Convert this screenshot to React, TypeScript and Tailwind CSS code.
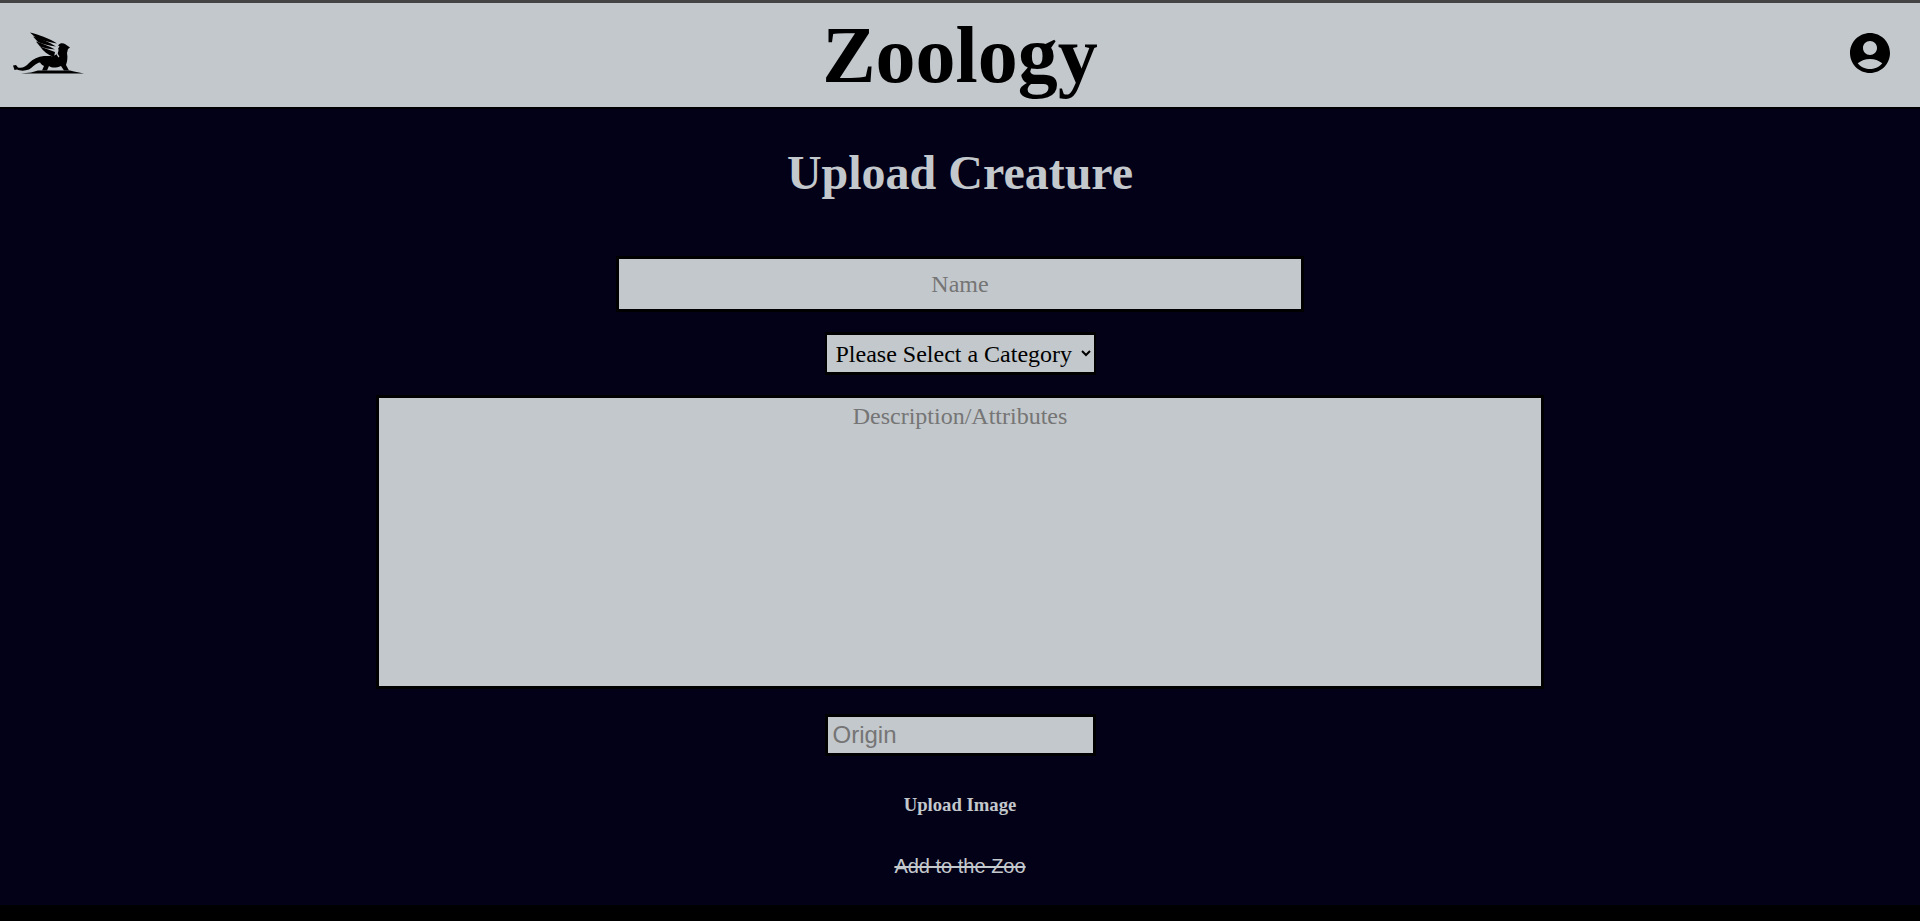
import { MdAccountCircle } from 'react-icons/md';

function Griffin() {
  return (
    <svg viewBox="12 30 74 46" className="w-[74px] h-[46px] -ml-[14px]" fill="#000">
      {/* wing feathers */}
      <path d="M30 32.5 C38 34.5 49 38 57 43.5 C50 42.5 42 40.5 36 38 Z" />
      <path d="M33 36.5 C40 38.5 49 42 56 46.5 C49 45.5 43 44 38 42 Z" />
      <path d="M36 41.5 C42 43.5 49 46 55 49.5 C49 49 44 48 40 46.5 Z" />
      <path d="M40 46.5 C45 48.5 50 50 55 52 L54 57 C48 55 43 51 40 46.5 Z" />
      {/* body, head and tail */}
      <path d="M50 56 C56 57 60 52 58 48 C57 44 62 42 65 44 L70 47.5 L68 49 L67 53 C68 58 67 62 66 65 L69 70.5 L64 70.5 L61 66 C56 68 52 68 49 66 L47 70.5 L42 70.5 L44 66 C42 65 41 64 40 62.5 C36 63 33 67 29 69.5 C25 71 20 71 17 69.5 L14.5 70 L13 65.5 L16 65 L18 67.5 C22 68.5 26 66.5 29 63 C33 59 38 56.5 44 56 Z" />
      {/* neck highlight */}
      <path d="M59 46 C56 49 56 54 59 57" fill="none" stroke="#c3c8cc" strokeWidth="1.2" />
      {/* ground */}
      <path d="M21 73.5 L31 72.5 L38 70.5 L70 70.5 L74 71.5 L84 73.5 Z" />
    </svg>
  );
}

export default function App() {
  return (
    <div className="min-h-[921px] bg-black font-['Liberation_Serif',serif]">
      <div className="bg-[#030118] h-[905px]">
        <header className="flex items-center h-[109px] bg-[#c3c8cc] border-t-[3px] border-t-[#444] border-b-2 border-b-black px-[26px] pb-1">
          <div className="flex-1 flex">
            <Griffin />
          </div>
          <h1 className="mt-1 text-[80px] leading-none font-bold text-black">Zoology</h1>
          <div className="flex-1 flex justify-end">
            <MdAccountCircle className="w-12 h-12 text-black" />
          </div>
        </header>

        <main className="flex flex-col items-center">
          <h2 className="mt-[36px] text-[48px] leading-[55px] font-bold text-[#c3c8cc]">Upload Creature</h2>

          <input
            placeholder="Name"
            className="mt-[56px] w-[688px] h-[56px] bg-[#c3c8cc] border-[3px] border-black text-[24px] text-center text-black placeholder:text-[#757575]"
          />

          <select
            defaultValue=""
            className="mt-[20px] w-[271px] h-[43px] pl-[5px] bg-[#c3c8cc] border-x-2 border-y-[3px] border-black text-[24px] text-black"
          >
            <option value="">Please Select a Category</option>
            <option value="mammal">Mammal</option>
            <option value="bird">Bird</option>
            <option value="reptile">Reptile</option>
          </select>

          <textarea
            placeholder="Description/Attributes"
            className="block mt-[20px] w-[1168px] h-[294px] resize-none bg-[#c3c8cc] border-[3px] border-black text-[24px] text-center text-black placeholder:text-[#757575]"
          />

          <input
            placeholder="Origin"
            className="mt-[25px] w-[271px] h-[42px] px-[5px] bg-[#c3c8cc] border-[3px] border-black font-['Liberation_Sans',sans-serif] text-[24px] text-black placeholder:text-[#757575]"
          />

          <h3 className="mt-[38px] text-[18.72px] leading-[22px] font-bold text-[#c3c8cc]">Upload Image</h3>

          <button className="mt-[39px] font-['Liberation_Sans',sans-serif] text-[20px] leading-[23px] line-through text-[#c3c8cc]">
            Add to the Zoo
          </button>
        </main>
      </div>
    </div>
  );
}
